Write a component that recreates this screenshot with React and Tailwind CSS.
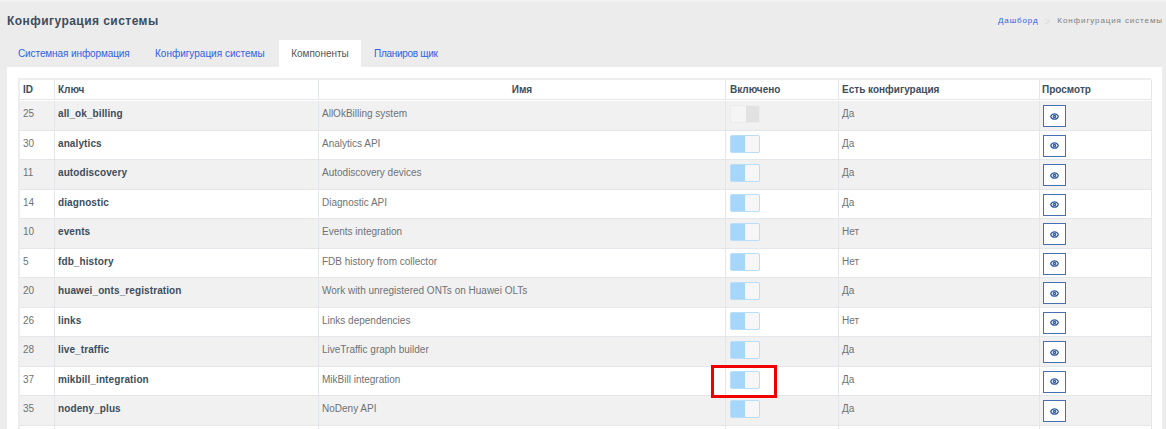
import React from 'react';
import { Eye } from 'lucide-react';

const rows = [
  { id: 25, key: 'all_ok_billing', name: 'AllOkBilling system', on: false, config: 'Да' },
  { id: 30, key: 'analytics', name: 'Analytics API', on: true, config: 'Да' },
  { id: 11, key: 'autodiscovery', name: 'Autodiscovery devices', on: true, config: 'Да' },
  { id: 14, key: 'diagnostic', name: 'Diagnostic API', on: true, config: 'Да' },
  { id: 10, key: 'events', name: 'Events integration', on: true, config: 'Нет' },
  { id: 5, key: 'fdb_history', name: 'FDB history from collector', on: true, config: 'Нет' },
  { id: 20, key: 'huawei_onts_registration', name: 'Work with unregistered ONTs on Huawei OLTs', on: true, config: 'Да' },
  { id: 26, key: 'links', name: 'Links dependencies', on: true, config: 'Нет' },
  { id: 28, key: 'live_traffic', name: 'LiveTraffic graph builder', on: true, config: 'Да' },
  { id: 37, key: 'mikbill_integration', name: 'MikBill integration', on: true, config: 'Да', marked: true },
  { id: 35, key: 'nodeny_plus', name: 'NoDeny API', on: true, config: 'Да' },
  { id: 0, key: '', name: '', on: null, config: '' },
];

function Toggle({ on }) {
  if (on) {
    return (
      <div className="flex h-[18px] w-[30px] rounded-[2px] border border-[#b8defa] bg-[#a6d6fa]">
        <div className="w-[14px]" />
        <div className="flex-1 rounded-[1px] bg-[#f7f7f7]" />
      </div>
    );
  }
  return (
    <div className="flex h-[18px] w-[30px] rounded-[2px] border border-[#ececec] bg-[#e2e2e2]">
      <div className="w-[15px] rounded-[1px] bg-[#f5f5f5]" />
    </div>
  );
}

function Row({ row, index }) {
  const bg = index % 2 === 0 ? 'bg-[#f1f1f1]' : 'bg-white';
  const cell = 'border-r border-b border-[#e4e6ea]';
  return (
    <div className={`grid h-[29.55px] grid-cols-[35px_264px_407px_113px_201px_112px] ${bg}`}>
      <div className={`${cell} pt-[5px] pl-[3px] text-[#6f7275]`}>{row.on !== null && row.id}</div>
      <div className={`${cell} pt-[5px] pl-[3px] font-bold tracking-[0.1px] text-[#3d4d5c]`}>{row.key}</div>
      <div className={`${cell} pt-[5px] pl-[3px] text-[#6f7275]`}>{row.name}</div>
      <div className={`${cell} relative pt-[4px] pl-[4px]`}>
        {row.on !== null && <Toggle on={row.on} />}
        {row.marked && (
          <div className="absolute top-[-2px] left-[-15px] h-[33px] w-[66px] border-[3px] border-[#f00000]" />
        )}
      </div>
      <div className={`${cell} pt-[5px] pl-[3px] text-[#6f7275]`}>{row.config}</div>
      <div className={`${cell} pt-[4px] pl-[3px]`}>
        {row.on !== null && (
          <div className="flex h-[22px] w-[23px] items-center justify-center border border-[#4a6fb0] bg-white text-[#2f5ca8]">
            <Eye size={9} strokeWidth={3.5} />
          </div>
        )}
      </div>
    </div>
  );
}

export default function App() {
  return (
    <div className="h-[429px] w-[1166px] overflow-hidden border-t-2 border-[#f2f2f2] bg-[#ececec] font-['Liberation_Sans',Arial,sans-serif] text-[10px]">
      <div className="flex h-[38px] items-center justify-between pr-[3px] pl-[7px]">
        <h1 className="text-[12px] font-bold tracking-[0.45px] text-[#3d4d5c]">Конфигурация системы</h1>
        <div className="flex items-center text-[8px] tracking-[0.9px]">
          <span className="text-[#2f62e8]">Дашборд</span>
          <span className="mx-[6px] text-[10px] text-[#dcdcdc]">&gt;</span>
          <span className="text-[#808080]">Конфигурация системы</span>
        </div>
      </div>
      <div className="flex h-[27px] pb-[1px] pl-[7px] text-[#2f62e8]">
        <div className="flex w-[135px] items-center pl-[11px] tracking-[-0.1px]">Системная информация</div>
        <div className="flex w-[137px] items-center pl-[13px]">Конфигурация системы</div>
        <div className="-mb-[1px] flex w-[82px] items-center justify-center bg-white pb-[1px] text-[#555]">Компоненты</div>
        <div className="flex items-center pl-[13px] tracking-[-0.3px]">Планиров щик</div>
      </div>
      <div className="ml-[7px] h-[400px] w-[1155px] bg-white px-[11px] pt-[11px]">
        <div className="border-t-2 border-l-2 border-[#eceef0]">
          <div className="grid h-[21px] grid-cols-[35px_264px_407px_113px_201px_112px] pb-[1px] font-bold text-[#3d4d5c]">
            <div className="flex items-center border-r border-b border-[#e4e6ea] pl-[3px]">ID</div>
            <div className="flex items-center border-r border-b border-[#e4e6ea] pl-[3px]">Ключ</div>
            <div className="flex items-center justify-center border-r border-b border-[#e4e6ea]">Имя</div>
            <div className="flex items-center border-r border-b border-[#e4e6ea] pl-[4px]">Включено</div>
            <div className="flex items-center border-r border-b border-[#e4e6ea] pl-[3px]">Есть конфигурация</div>
            <div className="flex items-center border-r border-b border-[#e4e6ea] pl-[2px]">Просмотр</div>
          </div>
          {rows.map((row, i) => (
            <Row key={i} row={row} index={i} />
          ))}
        </div>
      </div>
    </div>
  );
}
